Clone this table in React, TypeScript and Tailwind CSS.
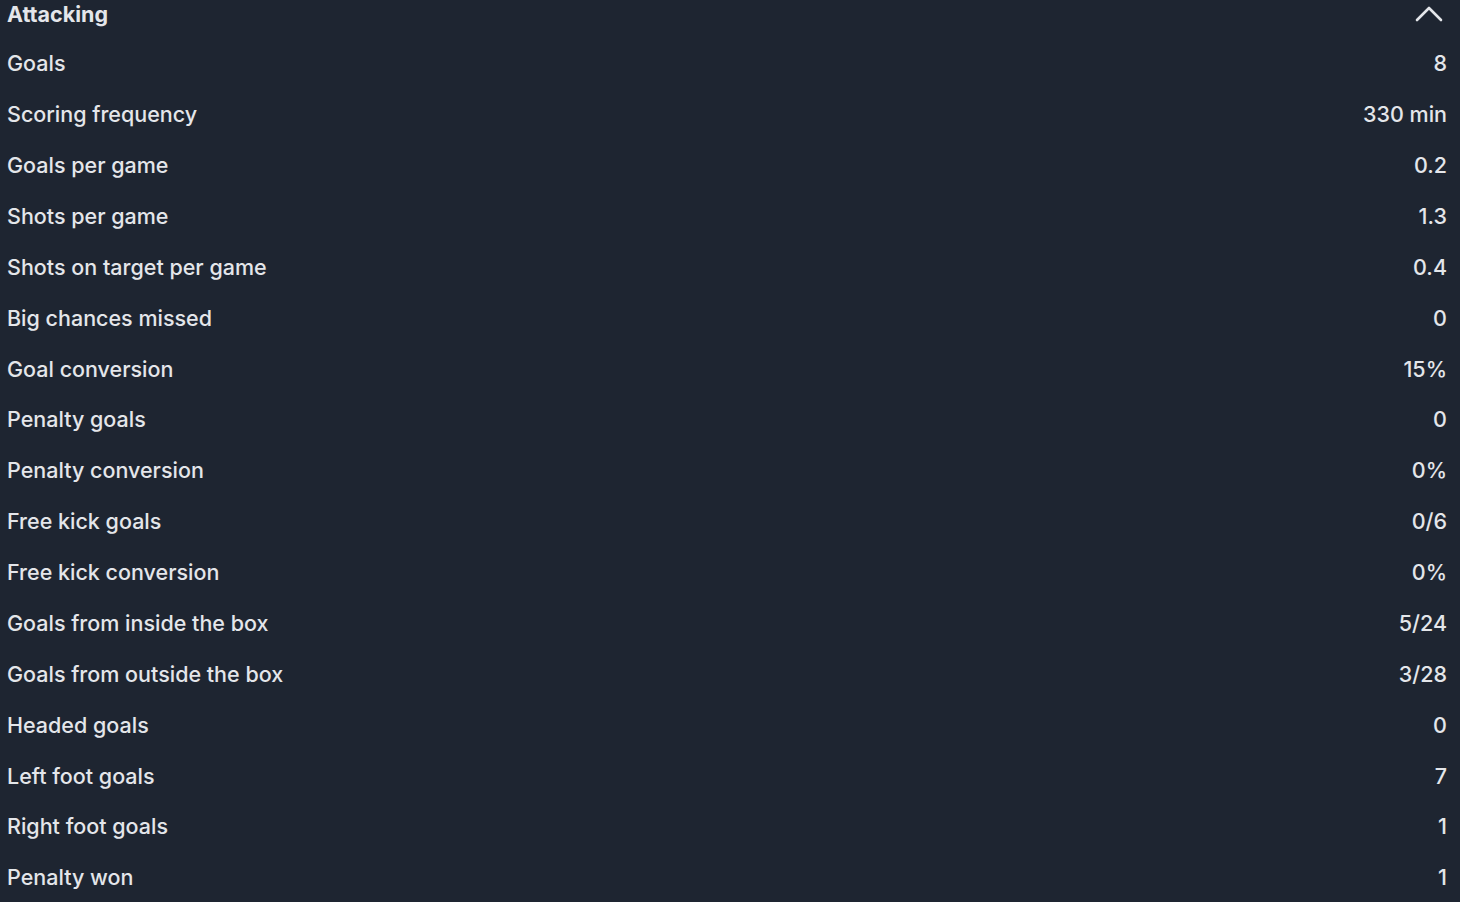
const rows: [string, string][] = [
  ["Goals", "8"],
  ["Scoring frequency", "330 min"],
  ["Goals per game", "0.2"],
  ["Shots per game", "1.3"],
  ["Shots on target per game", "0.4"],
  ["Big chances missed", "0"],
  ["Goal conversion", "15%"],
  ["Penalty goals", "0"],
  ["Penalty conversion", "0%"],
  ["Free kick goals", "0/6"],
  ["Free kick conversion", "0%"],
  ["Goals from inside the box", "5/24"],
  ["Goals from outside the box", "3/28"],
  ["Headed goals", "0"],
  ["Left foot goals", "7"],
  ["Right foot goals", "1"],
  ["Penalty won", "1"],
];

export default function App() {
  return (
    <div className="w-[1460px] h-[902px] overflow-hidden bg-[#1e2531] text-[#e4e6ea] font-['Inter',sans-serif]">
      {/* header */}
      <div className="h-[38px] flex items-start justify-between pl-[7px] pr-[15px]">
        <span className="text-[21.5px] leading-[28px] font-bold">Attacking</span>
        <svg width="32" height="28" viewBox="0 0 32 28" fill="none" stroke="currentColor" strokeWidth="2.6" strokeLinecap="round" strokeLinejoin="round">
          <path d="M4 20L16 8l12 12" />
        </svg>
      </div>

      {rows.map(([label, value]) => (
        <div key={label} className="h-[50.875px] flex items-center justify-between pl-[7px] pr-[13px] text-[21.5px] font-medium">
          <span>{label}</span>
          <span>{value}</span>
        </div>
      ))}
    </div>
  );
}
